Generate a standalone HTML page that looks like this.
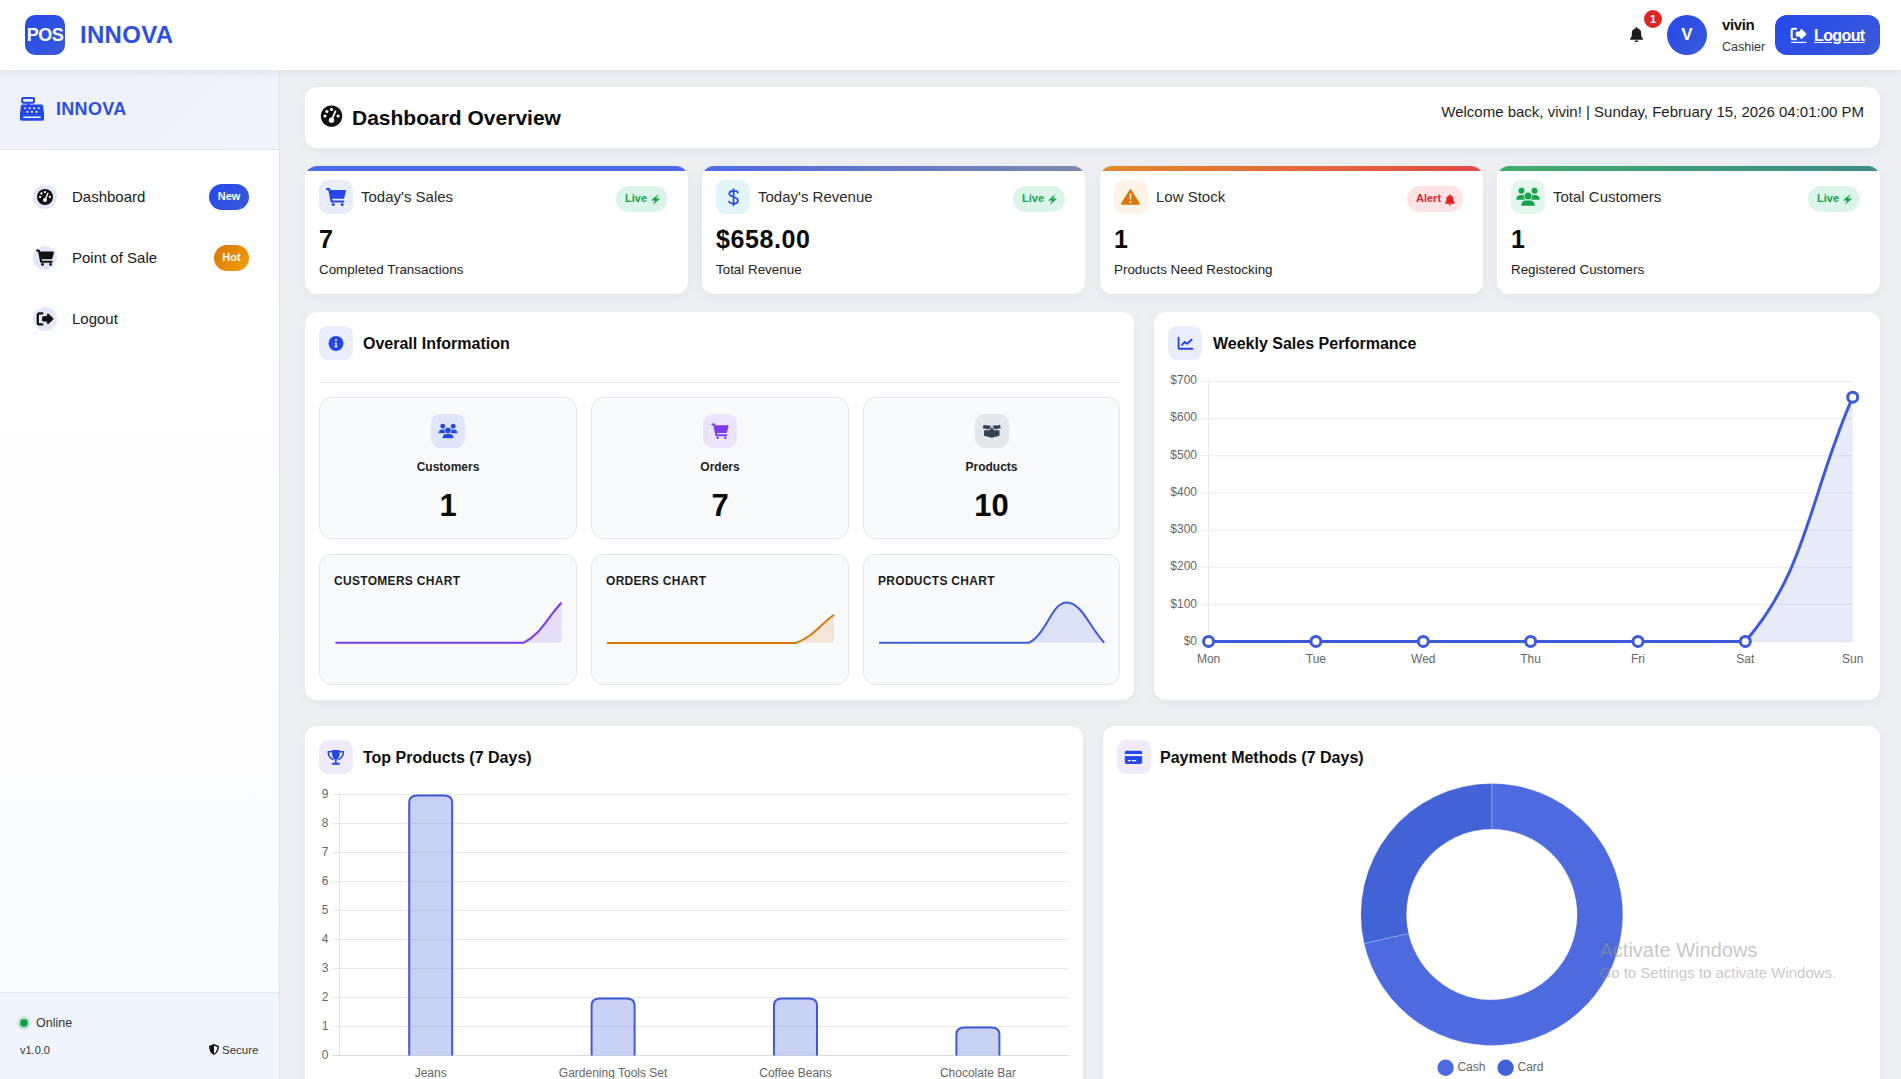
<!DOCTYPE html>
<html><head><meta charset="utf-8">
<style>
*{box-sizing:border-box;margin:0;padding:0}
html,body{width:1901px;height:1079px;overflow:hidden}
body{font-family:"Liberation Sans",sans-serif;background:#eef0f4;position:relative;color:#111}
.abs{position:absolute}
.hdr{left:0;top:0;width:1901px;height:70px;background:#fff;box-shadow:0 2px 8px rgba(20,30,60,.07);z-index:5}
.logo{left:25px;top:15px;width:40px;height:40px;border-radius:10px;background:linear-gradient(135deg,#2548ea,#3a5ad8);color:#fff;font-weight:700;font-size:18px;line-height:40px;text-align:center;letter-spacing:-0.5px}
.brand{left:80px;top:19px;font-size:24px;font-weight:700;color:#2d50e0;line-height:32px;letter-spacing:.3px}
.side{left:0;top:70px;width:280px;height:1009px;background:linear-gradient(180deg,#fefeff,#fbfcfe);border-right:1px solid #e0e4f8}
.sh{left:0;top:0;width:279px;height:80px;background:linear-gradient(135deg,#eef1fa,#f1f4fc);border-bottom:1px solid #dfe5f2}
.nav{left:33px;width:220px;height:26px}
.nic{left:0;top:0;width:24px;height:24px;border-radius:50%;background:#e3e8f8}
.ntx{left:39px;top:3px;font-size:15px;color:#1a1a1a;line-height:18px}
.badge{top:-1px;height:26px;border-radius:13px;color:#fff;font-weight:700;font-size:11px;line-height:24px;text-align:center}
.card{background:#fff;border-radius:12px;box-shadow:0 3px 14px rgba(20,30,50,.06)}
.stat{top:166px;width:383px;height:128px;overflow:hidden}
.stat .bar{left:0;top:0;width:100%;height:5px}
.sico{left:14px;top:14px;width:34px;height:34px;border-radius:9px}
.stit{left:56px;top:22px;font-size:15px;color:#2a2a2a;line-height:18px}
.sval{left:14px;top:59px;font-size:25px;font-weight:700;color:#0a0a0a;line-height:28px;letter-spacing:.6px}
.ssub{left:14px;top:96px;font-size:13.4px;color:#222;line-height:16px}
.pill{top:20px;height:26px;border-radius:13px;font-weight:700;font-size:11px;line-height:24px;padding:0 0 0 9px}
.ctit{font-size:16px;font-weight:700;color:#0d0d0d;line-height:22px}
.cico{width:34px;height:34px;border-radius:9px;background:#e9edfc}
.ibox{width:258px;background:#f8fafc;border:1px solid #e2e7ef;border-radius:12px}
.ibico{left:111px;top:16px;width:34px;height:34px;border-radius:9px}
.iblab{left:0;width:100%;top:62px;text-align:center;font-size:12px;font-weight:700;color:#222;line-height:14px}
.ibval{left:0;width:100%;top:90px;text-align:center;font-size:31px;font-weight:700;color:#0a0a0a;line-height:36px}
.chl{left:14px;top:19px;font-size:12px;font-weight:700;color:#1d1d1d;letter-spacing:.3px;line-height:14px}
</style></head>
<body>

<!-- HEADER -->
<div class="abs hdr">
  <div class="abs logo">POS</div>
  <div class="abs brand">INNOVA</div>
</div>

<!-- SIDEBAR -->
<div class="abs side">
  <div class="abs sh">
    <div class="abs" style="left:56px;top:28px;font-size:18px;font-weight:700;color:#2d50e0;line-height:22px;letter-spacing:.3px">INNOVA</div>
  </div>
  <div class="abs nav" style="top:115px">
    <div class="abs nic"></div>
    <div class="abs ntx">Dashboard</div>
    <div class="abs badge" style="left:176px;width:40px;background:linear-gradient(135deg,#2548ea,#3a5ad8)">New</div>
  </div>
  <div class="abs nav" style="top:176px">
    <div class="abs nic"></div>
    <div class="abs ntx">Point of Sale</div>
    <div class="abs badge" style="left:181px;width:35px;background:linear-gradient(135deg,#d97706,#f29e0f)">Hot</div>
  </div>
  <div class="abs nav" style="top:237px">
    <div class="abs nic"></div>
    <div class="abs ntx">Logout</div>
  </div>
  <div class="abs" style="left:0;top:922px;width:279px;height:87px;background:#f1f5fd;border-top:1px solid #dfe6f4">
    <div class="abs" style="left:20px;top:26px;width:8px;height:8px;border-radius:50%;background:#16a34a;box-shadow:0 0 0 3px rgba(22,163,74,.18)"></div>
    <div class="abs" style="left:36px;top:23px;font-size:12.5px;color:#333;line-height:14px">Online</div>
    <div class="abs" style="left:20px;top:51px;font-size:11px;color:#333;line-height:13px">v1.0.0</div>
    <div class="abs" style="left:222px;top:51px;font-size:11.5px;color:#333;line-height:13px">Secure</div>
  </div>
</div>

<!-- OVERVIEW -->
<div class="abs card" style="left:305px;top:87px;width:1575px;height:61px">
  <div class="abs" style="left:47px;top:18px;font-size:21px;font-weight:700;color:#0a0a0a;line-height:26px">Dashboard Overview</div>
  <div class="abs" style="right:16px;top:16px;font-size:15px;color:#1e1e1e;line-height:18px">Welcome back, vivin! | Sunday, February 15, 2026 04:01:00 PM</div>
</div>

<!-- STATS -->
<div class="abs card stat" style="left:305px">
  <div class="abs bar" style="background:#4f6ae6"></div>
  <div class="abs sico" style="background:#e8edfc"></div>
  <div class="abs stit">Today's Sales</div>
  <div class="abs pill" style="left:311px;width:52px;background:#dcf5ea;color:#16a34a">Live</div>
  <div class="abs sval">7</div>
  <div class="abs ssub">Completed Transactions</div>
</div>
<div class="abs card stat" style="left:702px">
  <div class="abs bar" style="background:linear-gradient(90deg,#4f6ae6,#7a8aa8)"></div>
  <div class="abs sico" style="background:#e3f4fb"></div>
  <div class="abs stit">Today's Revenue</div>
  <div class="abs pill" style="left:311px;width:52px;background:#dcf5ea;color:#16a34a">Live</div>
  <div class="abs sval">$658.00</div>
  <div class="abs ssub">Total Revenue</div>
</div>
<div class="abs card stat" style="left:1100px">
  <div class="abs bar" style="background:linear-gradient(90deg,#e08a2a,#e24a4a)"></div>
  <div class="abs sico" style="background:#fef3e6"></div>
  <div class="abs stit">Low Stock</div>
  <div class="abs pill" style="left:307px;width:56px;background:#fde4e4;color:#dc2626">Alert</div>
  <div class="abs sval">1</div>
  <div class="abs ssub">Products Need Restocking</div>
</div>
<div class="abs card stat" style="left:1497px">
  <div class="abs bar" style="background:linear-gradient(90deg,#3fae68,#3e8a8a)"></div>
  <div class="abs sico" style="background:#e3f7ee"></div>
  <div class="abs stit">Total Customers</div>
  <div class="abs pill" style="left:311px;width:52px;background:#dcf5ea;color:#16a34a">Live</div>
  <div class="abs sval">1</div>
  <div class="abs ssub">Registered Customers</div>
</div>

<!-- OVERALL INFO -->
<div class="abs card" style="left:305px;top:312px;width:829px;height:388px">
  <div class="abs cico" style="left:14px;top:14px"></div>
  <div class="abs ctit" style="left:58px;top:21px">Overall Information</div>
  <div class="abs" style="left:14px;top:70px;width:801px;height:1px;background:#e9edf3"></div>
  <div class="abs ibox" style="left:14px;top:85px;height:142px">
    <div class="abs ibico" style="background:#e0e6fa"></div>
    <div class="abs iblab">Customers</div>
    <div class="abs ibval">1</div>
  </div>
  <div class="abs ibox" style="left:286px;top:85px;height:142px">
    <div class="abs ibico" style="background:#ebe4fc"></div>
    <div class="abs iblab">Orders</div>
    <div class="abs ibval">7</div>
  </div>
  <div class="abs ibox" style="left:558px;width:257px;top:85px;height:142px">
    <div class="abs ibico" style="background:#e4e7ec"></div>
    <div class="abs iblab">Products</div>
    <div class="abs ibval">10</div>
  </div>
  <div class="abs ibox" style="left:14px;top:242px;height:131px"><div class="abs chl">CUSTOMERS CHART</div></div>
  <div class="abs ibox" style="left:286px;top:242px;height:131px"><div class="abs chl">ORDERS CHART</div></div>
  <div class="abs ibox" style="left:558px;width:257px;top:242px;height:131px"><div class="abs chl">PRODUCTS CHART</div></div>
</div>

<!-- WEEKLY -->
<div class="abs card" style="left:1154px;top:312px;width:726px;height:388px">
  <div class="abs cico" style="left:14px;top:14px"></div>
  <div class="abs ctit" style="left:59px;top:21px">Weekly Sales Performance</div>
</div>

<!-- TOP PRODUCTS -->
<div class="abs card" style="left:305px;top:726px;width:778px;height:400px">
  <div class="abs cico" style="left:14px;top:14px;background:#f1eafd"></div>
  <div class="abs ctit" style="left:58px;top:21px">Top Products (7 Days)</div>
</div>

<!-- PAYMENT -->
<div class="abs card" style="left:1103px;top:726px;width:777px;height:400px">
  <div class="abs cico" style="left:14px;top:14px;background:#f1eafd"></div>
  <div class="abs ctit" style="left:57px;top:21px">Payment Methods (7 Days)</div>
</div>

<div class="abs" style="left:1644px;top:10px;width:18px;height:18px;border-radius:50%;background:#dc2626;color:#fff;font-size:11px;font-weight:700;line-height:18px;text-align:center;z-index:11">1</div>
<div class="abs" style="left:1667px;top:15px;width:40px;height:40px;border-radius:50%;background:linear-gradient(135deg,#2548ea,#3a5ad8);color:#fff;font-size:17px;font-weight:700;line-height:40px;text-align:center;z-index:11">V</div>
<div class="abs" style="left:1722px;top:16px;font-size:15px;font-weight:700;color:#111;line-height:18px;letter-spacing:-.4px;z-index:11">vivin</div>
<div class="abs" style="left:1722px;top:39px;font-size:12.5px;color:#3a3a3a;line-height:16px;z-index:11">Cashier</div>
<div class="abs" style="left:1775px;top:15px;width:105px;height:40px;border-radius:12px;background:linear-gradient(135deg,#2548ea,#3a5ad8);z-index:10"></div>
<div class="abs" style="left:1814px;top:25.5px;font-size:16px;font-weight:700;color:#fff;line-height:19px;letter-spacing:-.6px;text-decoration:underline;z-index:12">Logout</div>
<svg class="abs" style="left:0;top:0;z-index:10" width="1901" height="1079" viewBox="0 0 1901 1079">
<defs>
<g id="cart"><path d="M0 1.1C0 .5.5 0 1.1 0H3.2C3.7 0 4.2.4 4.3.9L4.5 2H19C19.6 2 20.1 2.6 19.9 3.2L18.2 10C18.1 10.5 17.6 10.8 17.1 10.8H6.3L6.6 12.4H17.4C18 12.4 18.5 12.9 18.5 13.5S18 14.6 17.4 14.6H5.7C5.2 14.6 4.7 14.2 4.6 13.7L2.3 2.2H1.1C.5 2.2 0 1.7 0 1.1Z"/><circle cx="7.2" cy="16.5" r="1.5"/><circle cx="16.2" cy="16.5" r="1.5"/></g>
<g id="gauge"><circle cx="8" cy="8" r="8"/><g fill="#fff"><circle cx="8" cy="3.1" r="1.15"/><circle cx="4.5" cy="4.5" r="1.15"/><circle cx="3.1" cy="7.9" r="1.15"/><circle cx="12.9" cy="7.9" r="1.15"/><circle cx="8" cy="11" r="2"/></g><path d="M8 11L10.9 4.4" stroke="#fff" stroke-width="1.4" stroke-linecap="round"/></g>
<g id="signout"><path d="M6 1.3H3.4C2.1 1.3 1.3 2.1 1.3 3.4V10.6C1.3 11.9 2.1 12.7 3.4 12.7H6" fill="none" stroke-width="2.3" stroke-linecap="round"/><path d="M16.6 6.3C17 6.7 17 7.3 16.6 7.7L12.2 11.8C11.7 12.3 11 11.9 11 11.3V9.3H7C6.5 9.3 6.2 9 6.2 8.5V5.5C6.2 5 6.5 4.7 7 4.7H11V2.7C11 2.1 11.7 1.7 12.2 2.2Z"/></g>
<g id="bell"><path d="M6.5 0C5.9 0 5.5.4 5.5 1V1.7C3.2 2.2 1.8 4.1 1.8 6.4V8.2C1.8 9.6 1.3 11 .4 12.1L.1 12.5C-.2 13 .1 13.6.7 13.6H12.3C12.9 13.6 13.2 13 12.9 12.5L12.6 12.1C11.7 11 11.2 9.6 11.2 8.2V6.4C11.2 4.1 9.8 2.2 7.5 1.7V1C7.5.4 7.1 0 6.5 0ZM4.6 14.4C4.6 15.4 5.4 16.1 6.5 16.1S8.4 15.4 8.4 14.4Z"/></g>
<g id="bolt"><path d="M7.4.1L0 6.6H4.1L1.9 11 9.2 4.4H5.1Z"/></g>
<g id="users"><circle cx="10.5" cy="10.8" r="3"/><circle cx="23.5" cy="10.8" r="3"/><path d="M5.2 19.7Q5.4 15 9.8 15H13.2Q13.3 17.6 14.8 19.7Z"/><path d="M28.8 19.7Q28.6 15 24.2 15H20.8Q20.7 17.6 19.2 19.7Z"/><circle cx="17" cy="16" r="4.3" fill="currentColor"/><path d="M10.1 25.8Q10.5 20.4 14.8 20.4H19.2Q23.5 20.4 23.9 25.8Z" fill="currentColor" stroke="currentColor" stroke-width="1.8"/><circle cx="17" cy="16" r="3.5"/><path d="M10.1 25.8Q10.5 20.4 14.8 20.4H19.2Q23.5 20.4 23.9 25.8Z"/></g>
</defs>
<g transform="translate(1630,27) scale(1,0.93)" fill="#1c1c1c"><use href="#bell"/></g>
<g transform="translate(37,189)" fill="#111"><use href="#gauge"/></g>
<g transform="translate(36,249.6) scale(0.9)" fill="#111"><use href="#cart"/></g>
<g transform="translate(36.5,312) scale(0.98)" fill="#111" stroke="#111"><use href="#signout"/></g>
<g transform="translate(20,97)" fill="#2547e6"><rect x="2.2" y="0.9" width="11.8" height="4.8" rx="1" fill="none" stroke="#2547e6" stroke-width="2"/><rect x="7" y="5.5" width="2.5" height="2.5"/><path d="M2.8 7.5H21.3C22.3 7.5 23.1 8.2 23.2 9.2L24 17H0L.8 9.2C.9 8.2 1.7 7.5 2.7 7.5Z"/><rect x="0" y="15.5" width="24" height="8.2" rx="1.8"/><g fill="#eef1fa"><circle cx="5.2" cy="11.2" r="1.05"/><circle cx="9.7" cy="11.2" r="1.05"/><circle cx="14.2" cy="11.2" r="1.05"/><circle cx="18.7" cy="11.2" r="1.05"/><circle cx="7.5" cy="14.9" r="1.05"/><circle cx="12" cy="14.9" r="1.05"/><circle cx="16.5" cy="14.9" r="1.05"/><rect x="3" y="19.4" width="18" height="1.6" rx=".8"/></g></g>
<g transform="translate(320.8,105.4) scale(1.34)" fill="#111"><use href="#gauge"/></g>
<g transform="translate(1790.5,27.6) scale(0.92)" fill="#fff" stroke="#fff"><use href="#signout"/></g><rect x="1791" y="41.8" width="15.5" height="1.2" fill="#fff"/>
<g transform="translate(326,188)" fill="#2547e6"><use href="#cart"/></g>
<path d="M10.1 4.3C9.5 3.3 8.1 2.7 6.2 2.7H5.3C3.1 2.7 1.5 3.9 1.5 5.6C1.5 7.4 3.1 8.1 5.8 8.8C8.5 9.5 10.1 10.3 10.1 12.4C10.1 14.2 8.4 15.4 6.1 15.4H5.4C3.3 15.4 1.8 14.7 1.1 13.4M5.75 .9V17.1" transform="translate(727.8,188.2)" fill="none" stroke="#2547e6" stroke-width="1.75" stroke-linecap="round"/>
<g transform="translate(1121,189)"><path d="M9.5.3C9.9.3 10.3.5 10.5.9L18.8 14.3C19.2 15 18.7 15.8 17.9 15.8H1.1C.3 15.8-.2 15 .2 14.3L8.5.9C8.7.5 9.1.3 9.5.3Z" fill="#d97706"/><rect x="8.75" y="4.6" width="1.5" height="6" rx=".75" fill="#fff"/><circle cx="9.5" cy="12.9" r="1" fill="#fff"/></g>
<g transform="translate(1511,180)" fill="#16a34a" color="#e3f7ee"><use href="#users"/></g>
<g transform="translate(651,194)" fill="#16a34a"><use href="#bolt"/></g>
<g transform="translate(1048,194)" fill="#16a34a"><use href="#bolt"/></g>
<g transform="translate(1843,194)" fill="#16a34a"><use href="#bolt"/></g>
<g transform="translate(1445,194.3) scale(0.76,0.69)" fill="#dc2626"><use href="#bell"/></g>
<g transform="translate(328.5,335.9)"><circle cx="7.5" cy="7.5" r="7.5" fill="#2547e6"/><circle cx="7.5" cy="4.2" r="1" fill="#fff"/><path d="M6.2 6.6H8.2V10.4H9V11.4H6V10.4H6.9V7.5H6.2Z" fill="#fff"/></g>
<g transform="translate(434.3,417.5) scale(0.805)" fill="#2547e6" color="#e0e6fa"><use href="#users"/></g>
<g transform="translate(711.4,423.6) scale(0.86)" fill="#7c3aed"><use href="#cart"/></g>
<g transform="translate(982.8,424.8)" fill="#334155"><path d="M.7.2L8.3 1 6.4 4.6 0 3.5Z"/><path d="M17.3.2L9.7 1 11.6 4.6 18 3.5Z"/><path d="M1.3 5.4H6.9L9 1.9 11.1 5.4H16.7V10.9L9 13 1.3 10.9Z"/></g>
<g transform="translate(1177.6,336.7)" fill="none" stroke="#2547e6" stroke-width="1.9" stroke-linecap="round" stroke-linejoin="round"><path d="M1 .9V11.2C1 11.8 1.3 12.1 1.9 12.1H14.8"/><path d="M4.3 8.2L7.3 5.3 9.6 7.1 13.9 3"/></g>
<g transform="translate(327.3,750)" fill="#2547e6"><path d="M4.6 0H12.4L12.2 4C12 7.3 10.7 9.2 8.5 9.9 6.3 9.2 5 7.3 4.8 4Z"/><path d="M4.8 1.8H.9C.9 5.4 2.8 8.4 6.2 9.5M12.2 1.8H16.1C16.1 5.4 14.2 8.4 10.8 9.5" fill="none" stroke="#2547e6" stroke-width="1.5"/><rect x="7.6" y="9.4" width="1.8" height="3.6"/><rect x="4.7" y="12.7" width="7.6" height="2.1" rx=".5"/></g>
<g transform="translate(1124.8,750.8)"><rect width="17.3" height="13.1" rx="1.8" fill="#2547e6"/><rect y="3.2" width="17.3" height="2.1" fill="#f1eafd"/><rect x="2.9" y="9.1" width="3.2" height="1.3" rx=".6" fill="#fff"/><rect x="7" y="9.1" width="4.4" height="1.3" rx=".6" fill="#fff"/></g>
<g transform="translate(208.7,1044)"><path d="M5.25 0L.3 2C.3 6.5 2 9.5 5.25 11 8.5 9.5 10.2 6.5 10.2 2Z" fill="#111"/><path d="M5.3 1.7L8.7 3.05C8.6 6.2 7.4 8.4 5.3 9.4Z" fill="#f1f5fd"/></g>
<line x1="1201" y1="641.4" x2="1853" y2="641.4" stroke="#ebebeb" stroke-width="1"/>
<text x="1197" y="645.0" text-anchor="end" font-size="12" fill="#666">$0</text>
<line x1="1201" y1="604.3" x2="1853" y2="604.3" stroke="#ebebeb" stroke-width="1"/>
<text x="1197" y="608.0" text-anchor="end" font-size="12" fill="#666">$100</text>
<line x1="1201" y1="567.2" x2="1853" y2="567.2" stroke="#ebebeb" stroke-width="1"/>
<text x="1197" y="570.0" text-anchor="end" font-size="12" fill="#666">$200</text>
<line x1="1201" y1="530.1" x2="1853" y2="530.1" stroke="#ebebeb" stroke-width="1"/>
<text x="1197" y="533.0" text-anchor="end" font-size="12" fill="#666">$300</text>
<line x1="1201" y1="493.0" x2="1853" y2="493.0" stroke="#ebebeb" stroke-width="1"/>
<text x="1197" y="496.0" text-anchor="end" font-size="12" fill="#666">$400</text>
<line x1="1201" y1="455.8" x2="1853" y2="455.8" stroke="#ebebeb" stroke-width="1"/>
<text x="1197" y="459.0" text-anchor="end" font-size="12" fill="#666">$500</text>
<line x1="1201" y1="418.7" x2="1853" y2="418.7" stroke="#ebebeb" stroke-width="1"/>
<text x="1197" y="421.0" text-anchor="end" font-size="12" fill="#666">$600</text>
<line x1="1201" y1="381.6" x2="1853" y2="381.6" stroke="#ebebeb" stroke-width="1"/>
<text x="1197" y="384.0" text-anchor="end" font-size="12" fill="#666">$700</text>
<line x1="1208.5" y1="381.6" x2="1208.5" y2="646" stroke="#e6e6e6" stroke-width="1"/>
<path d="M1208.6 641.4 C1251.5 641.4 1273.0 641.4 1315.9 641.4 C1358.9 641.4 1380.4 641.4 1423.3 641.4 C1466.2 641.4 1487.7 641.4 1530.6 641.4 C1573.6 641.4 1595.1 641.4 1638.0 641.4 C1680.9 641.4 1720.7 641.4 1745.3 641.4 C1806.6 571.7 1809.8 494.9 1852.7 397.2 L1852.7 641.4 L1208.6 641.4 Z" fill="rgba(61,90,217,0.12)"/>
<text x="1208.6" y="663" text-anchor="middle" font-size="12" fill="#666">Mon</text>
<text x="1315.9" y="663" text-anchor="middle" font-size="12" fill="#666">Tue</text>
<text x="1423.3" y="663" text-anchor="middle" font-size="12" fill="#666">Wed</text>
<text x="1530.6" y="663" text-anchor="middle" font-size="12" fill="#666">Thu</text>
<text x="1638.0" y="663" text-anchor="middle" font-size="12" fill="#666">Fri</text>
<text x="1745.3" y="663" text-anchor="middle" font-size="12" fill="#666">Sat</text>
<text x="1852.7" y="663" text-anchor="middle" font-size="12" fill="#666">Sun</text>
<path d="M1208.6 641.4 C1251.5 641.4 1273.0 641.4 1315.9 641.4 C1358.9 641.4 1380.4 641.4 1423.3 641.4 C1466.2 641.4 1487.7 641.4 1530.6 641.4 C1573.6 641.4 1595.1 641.4 1638.0 641.4 C1680.9 641.4 1720.7 641.4 1745.3 641.4 C1806.6 571.7 1809.8 494.9 1852.7 397.2" fill="none" stroke="#3d5ad9" stroke-width="3"/>
<circle cx="1208.6" cy="641.4" r="5" fill="#fff" stroke="#3d5ad9" stroke-width="3"/>
<circle cx="1315.9" cy="641.4" r="5" fill="#fff" stroke="#3d5ad9" stroke-width="3"/>
<circle cx="1423.3" cy="641.4" r="5" fill="#fff" stroke="#3d5ad9" stroke-width="3"/>
<circle cx="1530.6" cy="641.4" r="5" fill="#fff" stroke="#3d5ad9" stroke-width="3"/>
<circle cx="1638.0" cy="641.4" r="5" fill="#fff" stroke="#3d5ad9" stroke-width="3"/>
<circle cx="1745.3" cy="641.4" r="5" fill="#fff" stroke="#3d5ad9" stroke-width="3"/>
<circle cx="1852.7" cy="397.2" r="5" fill="#fff" stroke="#3d5ad9" stroke-width="3"/>
<path d="M335.4 642.7 C350.5 642.7 358.0 642.7 373.1 642.7 C388.2 642.7 395.7 642.7 410.8 642.7 C425.9 642.7 433.4 642.7 448.5 642.7 C463.6 642.7 471.1 642.7 486.2 642.7 C501.3 642.7 511.6 642.7 523.9 642.7 C541.8 633.2 546.5 618.6 561.6 602.5 L561.6 642.7 L335.4 642.7 Z" fill="rgba(124,58,237,0.15)"/>
<path d="M335.4 642.7 C350.5 642.7 358.0 642.7 373.1 642.7 C388.2 642.7 395.7 642.7 410.8 642.7 C425.9 642.7 433.4 642.7 448.5 642.7 C463.6 642.7 471.1 642.7 486.2 642.7 C501.3 642.7 511.6 642.7 523.9 642.7 C541.8 633.2 546.5 618.6 561.6 602.5" fill="none" stroke="#7c3aed" stroke-width="2"/>
<path d="M607.0 642.9 C622.1 642.9 629.7 642.9 644.8 642.9 C660.0 642.9 667.5 642.9 682.7 642.9 C697.8 642.9 705.4 642.9 720.5 642.9 C735.6 642.9 743.2 642.9 758.3 642.9 C773.5 642.9 782.7 642.9 796.2 642.9 C813.0 636.6 818.9 626.0 834.0 614.7 L834.0 642.9 L607.0 642.9 Z" fill="rgba(217,119,6,0.15)"/>
<path d="M607.0 642.9 C622.1 642.9 629.7 642.9 644.8 642.9 C660.0 642.9 667.5 642.9 682.7 642.9 C697.8 642.9 705.4 642.9 720.5 642.9 C735.6 642.9 743.2 642.9 758.3 642.9 C773.5 642.9 782.7 642.9 796.2 642.9 C813.0 636.6 818.9 626.0 834.0 614.7" fill="none" stroke="#d97706" stroke-width="2"/>
<path d="M879.0 642.7 C894.0 642.7 901.5 642.7 916.5 642.7 C931.5 642.7 939.1 642.7 954.1 642.7 C969.1 642.7 976.6 642.7 991.6 642.7 C1006.6 642.7 1017.0 642.7 1029.1 642.7 C1047.0 633.1 1051.7 602.5 1066.7 602.5 C1081.7 602.5 1089.2 626.6 1104.2 642.7 L1104.2 642.7 L879.0 642.7 Z" fill="rgba(59,91,219,0.15)"/>
<path d="M879.0 642.7 C894.0 642.7 901.5 642.7 916.5 642.7 C931.5 642.7 939.1 642.7 954.1 642.7 C969.1 642.7 976.6 642.7 991.6 642.7 C1006.6 642.7 1017.0 642.7 1029.1 642.7 C1047.0 633.1 1051.7 602.5 1066.7 602.5 C1081.7 602.5 1089.2 626.6 1104.2 642.7" fill="none" stroke="#3b5bdb" stroke-width="2"/>
<line x1="332" y1="1055.5" x2="1069" y2="1055.5" stroke="#dcdcdc" stroke-width="1"/>
<text x="328.5" y="1059.1" text-anchor="end" font-size="12" fill="#666">0</text>
<line x1="332" y1="1026.5" x2="1069" y2="1026.5" stroke="#e9e9e9" stroke-width="1"/>
<text x="328.5" y="1030.1" text-anchor="end" font-size="12" fill="#666">1</text>
<line x1="332" y1="997.5" x2="1069" y2="997.5" stroke="#e9e9e9" stroke-width="1"/>
<text x="328.5" y="1001.1" text-anchor="end" font-size="12" fill="#666">2</text>
<line x1="332" y1="968.5" x2="1069" y2="968.5" stroke="#e9e9e9" stroke-width="1"/>
<text x="328.5" y="972.1" text-anchor="end" font-size="12" fill="#666">3</text>
<line x1="332" y1="939.5" x2="1069" y2="939.5" stroke="#e9e9e9" stroke-width="1"/>
<text x="328.5" y="943.1" text-anchor="end" font-size="12" fill="#666">4</text>
<line x1="332" y1="910.5" x2="1069" y2="910.5" stroke="#e9e9e9" stroke-width="1"/>
<text x="328.5" y="914.1" text-anchor="end" font-size="12" fill="#666">5</text>
<line x1="332" y1="881.5" x2="1069" y2="881.5" stroke="#e9e9e9" stroke-width="1"/>
<text x="328.5" y="885.1" text-anchor="end" font-size="12" fill="#666">6</text>
<line x1="332" y1="852.5" x2="1069" y2="852.5" stroke="#e9e9e9" stroke-width="1"/>
<text x="328.5" y="856.1" text-anchor="end" font-size="12" fill="#666">7</text>
<line x1="332" y1="823.5" x2="1069" y2="823.5" stroke="#e9e9e9" stroke-width="1"/>
<text x="328.5" y="827.1" text-anchor="end" font-size="12" fill="#666">8</text>
<line x1="332" y1="794.5" x2="1069" y2="794.5" stroke="#e9e9e9" stroke-width="1"/>
<text x="328.5" y="798.1" text-anchor="end" font-size="12" fill="#666">9</text>
<line x1="339.5" y1="794" x2="339.5" y2="1056" stroke="#e6e6e6" stroke-width="1"/>
<path d="M409.2 1055.5V802.5Q409.2 795.5 417.2 795.5H444.2Q452.2 795.5 452.2 802.5V1055.5" fill="rgba(61,90,217,0.28)" stroke="#3d5ad9" stroke-width="2"/>
<text x="430.7" y="1077" text-anchor="middle" font-size="12" fill="#666">Jeans</text>
<path d="M591.6 1055.5V1005.5Q591.6 998.5 599.6 998.5H626.6Q634.6 998.5 634.6 1005.5V1055.5" fill="rgba(61,90,217,0.28)" stroke="#3d5ad9" stroke-width="2"/>
<text x="613.1" y="1077" text-anchor="middle" font-size="12" fill="#666">Gardening Tools Set</text>
<path d="M774.0 1055.5V1005.5Q774.0 998.5 782.0 998.5H809.0Q817.0 998.5 817.0 1005.5V1055.5" fill="rgba(61,90,217,0.28)" stroke="#3d5ad9" stroke-width="2"/>
<text x="795.5" y="1077" text-anchor="middle" font-size="12" fill="#666">Coffee Beans</text>
<path d="M956.4 1055.5V1034.5Q956.4 1027.5 964.4 1027.5H991.4Q999.4 1027.5 999.4 1034.5V1055.5" fill="rgba(61,90,217,0.28)" stroke="#3d5ad9" stroke-width="2"/>
<text x="977.9" y="1077" text-anchor="middle" font-size="12" fill="#666">Chocolate Bar</text>
<path d="M1491.80 783.50 A131.0 131.0 0 1 1 1364.06 943.52 L1408.62 933.40 A85.3 85.3 0 1 0 1491.80 829.20 Z" fill="#4d6ade" stroke="rgba(255,255,255,.45)" stroke-width="0.5"/>
<path d="M1364.06 943.52 A131.0 131.0 0 0 1 1491.80 783.50 L1491.80 829.20 A85.3 85.3 0 0 0 1408.62 933.40 Z" fill="#4262d6" stroke="rgba(255,255,255,.45)" stroke-width="0.5"/>
<circle cx="1445.6" cy="1067.7" r="8.2" fill="#4d6ade"/><text x="1457.4" y="1071" font-size="12" fill="#666">Cash</text>
<circle cx="1505.6" cy="1067.7" r="8.2" fill="#4262d6"/><text x="1517.5" y="1071" font-size="12" fill="#666">Card</text>
<text x="1599.5" y="957" font-size="20" fill="rgba(150,150,150,0.55)">Activate Windows</text>
<text x="1599.5" y="978" font-size="15" fill="rgba(150,150,150,0.55)">Go to Settings to activate Windows.</text>
</svg>
</body></html>
